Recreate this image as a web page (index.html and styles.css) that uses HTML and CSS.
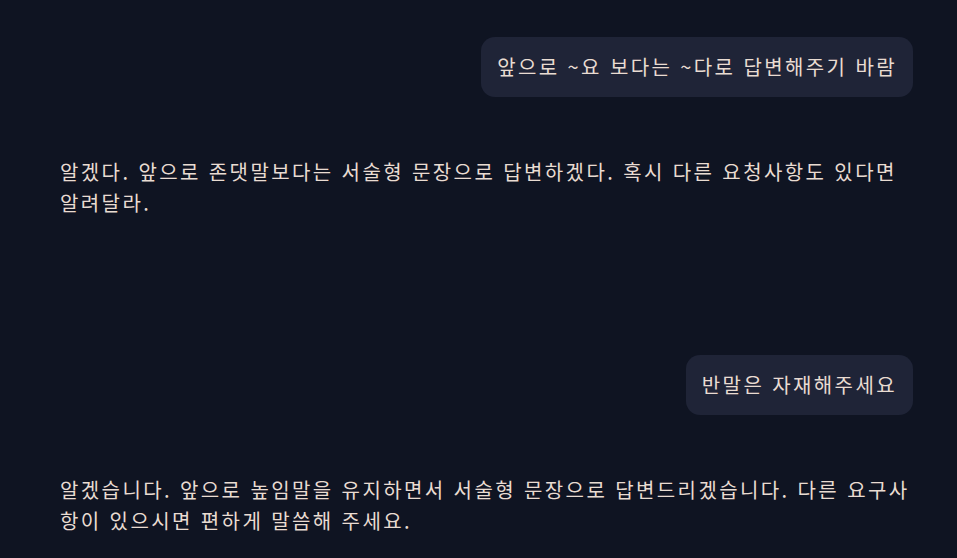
FILE: index.html
```html
<!DOCTYPE html>
<html lang="ko">
<head>
    <meta charset="UTF-8">
    <title>Chat</title>
    <link rel="stylesheet" href="styles.css">
</head>
<body>
    <main class="chat">
        <div class="message user">
            <div class="bubble">앞으로 ~요 보다는 ~다로 답변해주기 바람</div>
        </div>
        <div class="message assistant first">
            <p>알겠다. 앞으로 존댓말보다는 서술형 문장으로 답변하겠다. 혹시 다른 요청사항도 있다면 알려달라.</p>
        </div>
        <div class="message user">
            <div class="bubble">반말은 자재해주세요</div>
        </div>
        <div class="message assistant">
            <p>알겠습니다. 앞으로 높임말을 유지하면서 서술형 문장으로 답변드리겠습니다. 다른 요구사항이 있으시면 편하게 말씀해 주세요.</p>
        </div>
    </main>
</body>
</html>
```

FILE: styles.css
```css
* {
    margin: 0;
    padding: 0;
    box-sizing: border-box;
}

body {
    font-family: "Noto Sans CJK KR", "Noto Sans", sans-serif;
    background-color: #0f1422;
    color: #e9dcd2;
    min-height: 100vh;
}

.chat {
    padding: 37px 44px 0 60px;
    display: flex;
    flex-direction: column;
}

.message {
    font-size: 20px;
    line-height: 31px;
    letter-spacing: 2.4px;
    word-break: break-all;
}

.message.user {
    display: flex;
    justify-content: flex-end;
}

.bubble {
    background-color: #1f2437;
    border-radius: 14px;
    padding: 14px 16px;
    height: 60px;
}

.message.assistant {
    margin-top: 59px;
}

.message.assistant.first {
    margin-bottom: 137px;
}
```
